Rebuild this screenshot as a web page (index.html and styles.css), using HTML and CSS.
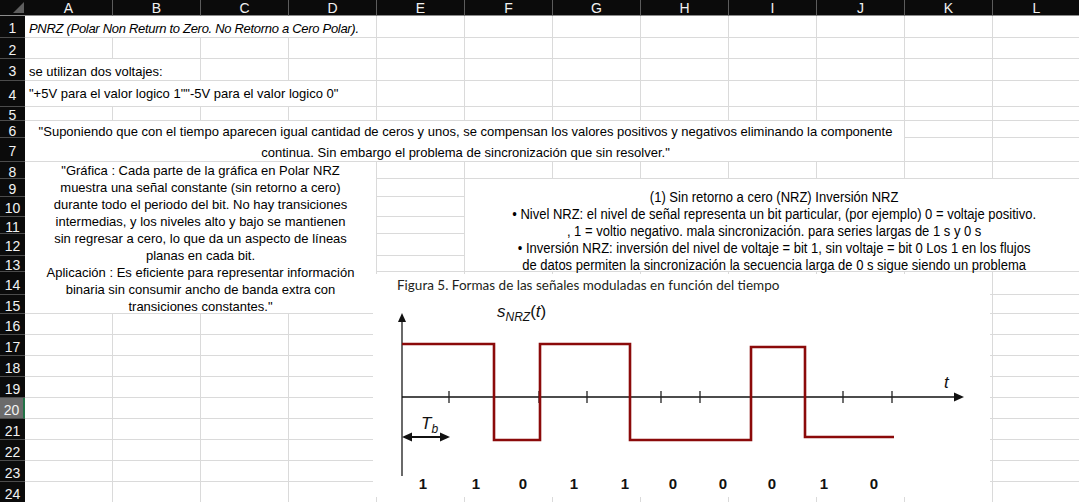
FILE: index.html
```html
<!DOCTYPE html>
<html lang="es">
<head>
<meta charset="utf-8">
<title>PNRZ</title>
<link rel="stylesheet" href="styles.css">
</head>
<body>
<div class="sheet">
  <div class="corner"></div>
  <div class="ch">A</div><div class="ch">B</div><div class="ch">C</div><div class="ch">D</div><div class="ch">E</div><div class="ch">F</div><div class="ch">G</div><div class="ch">H</div><div class="ch">I</div><div class="ch">J</div><div class="ch">K</div><div class="ch">L</div>

  <div class="rh">1</div>
  <div class="c cell m-a1 it">PNRZ (Polar Non Return to Zero. No Retorno a Cero Polar).</div>
  <div class="c"></div><div class="c"></div><div class="c"></div><div class="c"></div><div class="c"></div><div class="c"></div><div class="c"></div><div class="c"></div>

  <div class="rh">2</div>
  <div class="c"></div><div class="c"></div><div class="c"></div><div class="c"></div><div class="c"></div><div class="c"></div><div class="c"></div><div class="c"></div><div class="c"></div><div class="c"></div><div class="c"></div><div class="c"></div>

  <div class="rh">3</div>
  <div class="c cell m-a3">se utilizan dos voltajes:</div>
  <div class="c"></div><div class="c"></div><div class="c"></div><div class="c"></div><div class="c"></div><div class="c"></div><div class="c"></div><div class="c"></div><div class="c"></div><div class="c"></div>

  <div class="rh">4</div>
  <div class="c cell m-a4">"+5V para el valor logico 1""-5V para el valor logico 0"</div>
  <div class="c"></div><div class="c"></div><div class="c"></div><div class="c"></div><div class="c"></div><div class="c"></div><div class="c"></div><div class="c"></div>

  <div class="rh">5</div>
  <div class="c"></div><div class="c"></div><div class="c"></div><div class="c"></div><div class="c"></div><div class="c"></div><div class="c"></div><div class="c"></div><div class="c"></div><div class="c"></div><div class="c"></div><div class="c"></div>

  <div class="rh">6</div>
  <div class="c block m-a6">"Suponiendo que con el tiempo aparecen igual cantidad de ceros y unos, se compensan los valores positivos y negativos eliminando la componente<br>continua. Sin embargo el problema de sincronización que sin resolver."</div>
  <div class="c"></div><div class="c"></div>

  <div class="rh">7</div>
  <div class="c"></div><div class="c"></div>

  <div class="rh">8</div>
  <div class="c block m-a8">"Gráfica : Cada parte de la gráfica en Polar NRZ<br>muestra una señal constante (sin retorno a cero)<br>durante todo el periodo del bit. No hay transiciones<br>intermedias, y los niveles alto y bajo se mantienen<br>sin regresar a cero, lo que da un aspecto de líneas<br>planas en cada bit.<br>Aplicación : Es eficiente para representar información<br>binaria sin consumir ancho de banda extra con<br>transiciones constantes."</div>
  <div class="c"></div><div class="c"></div><div class="c"></div><div class="c"></div><div class="c"></div><div class="c"></div><div class="c"></div><div class="c"></div>

  <div class="rh">9</div>
  <div class="c"></div>
  <div class="c m-f9">
    <div class="narrow">(1) Sin retorno a cero (NRZ) Inversión NRZ<br>• Nivel NRZ: el nivel de señal representa un bit particular, (por ejemplo) 0 = voltaje positivo.<br>, 1 = voltio negativo. mala sincronización. para series largas de 1 s y 0 s<br>• Inversión NRZ: inversión del nivel de voltaje = bit 1, sin voltaje = bit 0 Los 1 en los flujos<br>de datos permiten la sincronización la secuencia larga de 0 s sigue siendo un problema</div>
  </div>

  <div class="rh">10</div>
  <div class="c"></div>
  <div class="rh">11</div>
  <div class="c"></div>
  <div class="rh">12</div>
  <div class="c"></div>
  <div class="rh">13</div>
  <div class="c"></div>

  <div class="rh">14</div>
  <div class="c"></div><div class="c"></div><div class="c"></div><div class="c"></div><div class="c"></div><div class="c"></div><div class="c"></div><div class="c"></div>
  <div class="rh">15</div>
  <div class="c"></div><div class="c"></div><div class="c"></div><div class="c"></div><div class="c"></div><div class="c"></div><div class="c"></div><div class="c"></div>

  <div class="rh">16</div>
  <div class="c"></div><div class="c"></div><div class="c"></div><div class="c"></div><div class="c"></div><div class="c"></div><div class="c"></div><div class="c"></div><div class="c"></div><div class="c"></div><div class="c"></div><div class="c"></div>
  <div class="rh">17</div>
  <div class="c"></div><div class="c"></div><div class="c"></div><div class="c"></div><div class="c"></div><div class="c"></div><div class="c"></div><div class="c"></div><div class="c"></div><div class="c"></div><div class="c"></div><div class="c"></div>
  <div class="rh">18</div>
  <div class="c"></div><div class="c"></div><div class="c"></div><div class="c"></div><div class="c"></div><div class="c"></div><div class="c"></div><div class="c"></div><div class="c"></div><div class="c"></div><div class="c"></div><div class="c"></div>
  <div class="rh">19</div>
  <div class="c"></div><div class="c"></div><div class="c"></div><div class="c"></div><div class="c"></div><div class="c"></div><div class="c"></div><div class="c"></div><div class="c"></div><div class="c"></div><div class="c"></div><div class="c"></div>
  <div class="rh sel">20</div>
  <div class="c"></div><div class="c"></div><div class="c"></div><div class="c"></div><div class="c"></div><div class="c"></div><div class="c"></div><div class="c"></div><div class="c"></div><div class="c"></div><div class="c"></div><div class="c"></div>
  <div class="rh">21</div>
  <div class="c"></div><div class="c"></div><div class="c"></div><div class="c"></div><div class="c"></div><div class="c"></div><div class="c"></div><div class="c"></div><div class="c"></div><div class="c"></div><div class="c"></div><div class="c"></div>
  <div class="rh">22</div>
  <div class="c"></div><div class="c"></div><div class="c"></div><div class="c"></div><div class="c"></div><div class="c"></div><div class="c"></div><div class="c"></div><div class="c"></div><div class="c"></div><div class="c"></div><div class="c"></div>
  <div class="rh">23</div>
  <div class="c"></div><div class="c"></div><div class="c"></div><div class="c"></div><div class="c"></div><div class="c"></div><div class="c"></div><div class="c"></div><div class="c"></div><div class="c"></div><div class="c"></div><div class="c"></div>
  <div class="rh">24</div>
  <div class="c"></div><div class="c"></div><div class="c"></div><div class="c"></div><div class="c"></div><div class="c"></div><div class="c"></div><div class="c"></div><div class="c"></div><div class="c"></div><div class="c"></div><div class="c"></div>

  <div class="figure">
    <div class="caption">Figura 5. Formas de las señales moduladas en función del tiempo</div>
    <svg class="chart" width="617" height="223" viewBox="0 0 617 223" xmlns="http://www.w3.org/2000/svg">
      <line x1="29" y1="46" x2="29" y2="202" stroke="#444" stroke-width="1.6"/>
      <polygon points="29,39 25,48 33,48" fill="#111"/>
      <line x1="29" y1="123" x2="583" y2="123" stroke="#111" stroke-width="1.3"/>
      <polygon points="591,123 581,118.5 581,127.5" fill="#111"/>
      <g stroke="#222" stroke-width="1.3">
        <line x1="76" y1="117" x2="76" y2="129"/>
        <line x1="166" y1="117" x2="166" y2="129"/>
        <line x1="214" y1="117" x2="214" y2="129"/>
        <line x1="288" y1="117" x2="288" y2="129"/>
        <line x1="327" y1="117" x2="327" y2="129"/>
        <line x1="470" y1="117" x2="470" y2="129"/>
        <line x1="519" y1="117" x2="519" y2="129"/>
      </g>
      <polyline points="29,70 121,70 121,166 167,166 167,70 257,70 257,166 378,166 378,73 432,73 432,163 521,163" fill="none" stroke="#8b0a0a" stroke-width="2.6"/>
      <line x1="36" y1="163" x2="69" y2="163" stroke="#111" stroke-width="2"/>
      <polygon points="29,163 39,158.5 39,167.5" fill="#111"/>
      <polygon points="77,163 67,158.5 67,167.5" fill="#111"/>
      <text class="lbl" x="124" y="43">s<tspan class="sub" dy="4">NRZ</tspan><tspan class="up" dy="-4">(</tspan>t<tspan class="up">)</tspan></text>
      <text class="lbl" x="571" y="114">t</text>
      <text class="lbl" x="48" y="155">T<tspan class="sub" dy="4">b</tspan></text>
      <g class="bits">
        <text x="50" y="215">1</text>
        <text x="103" y="215">1</text>
        <text x="150" y="215">0</text>
        <text x="201" y="215">1</text>
        <text x="252" y="215">1</text>
        <text x="300" y="215">0</text>
        <text x="350" y="215">0</text>
        <text x="399" y="215">0</text>
        <text x="451" y="215">1</text>
        <text x="501" y="215">0</text>
      </g>
    </svg>
  </div>
</div>
</body>
</html>
```
FILE: styles.css
```css
* {
  box-sizing: border-box;
  margin: 0;
  padding: 0;
}

html,
body {
  width: 1079px;
  height: 502px;
  overflow: hidden;
  background: #ffffff;
}

body {
  font-family: "Liberation Sans", Arial, sans-serif;
  font-size: 13px;
  color: #000000;
}

.sheet {
  position: relative;
  display: grid;
  width: 1081px;
  grid-template-columns: 25px repeat(12, 88px);
  grid-template-rows: 16px 22px 21px 22px 26px 14px 17px 24px 17px 18px 20px 17px 22px 16px 23px 19px repeat(9, 21px);
}

.c {
  background: #ffffff;
  border-right: 1px solid #dadada;
  border-bottom: 1px solid #dadada;
}

.corner {
  position: relative;
  background: #0b0b0b;
  border-bottom: 1px solid #8c8c8c;
}

.corner::after {
  content: "";
  position: absolute;
  right: 1px;
  bottom: 2px;
  width: 0;
  height: 0;
  border-left: 11px solid transparent;
  border-bottom: 11px solid #5e5e5e;
}

.ch {
  display: flex;
  align-items: center;
  justify-content: center;
  background: #0b0b0b;
  color: #f2f2f2;
  font-size: 14px;
  line-height: 1;
  border-right: 1px solid #5c5c5c;
  border-bottom: 1px solid #8c8c8c;
}

.rh {
  display: flex;
  align-items: center;
  justify-content: center;
  padding-top: 3px;
  background: #0b0b0b;
  color: #f2f2f2;
  font-size: 14px;
  line-height: 1;
  border-bottom: 1px solid #4c4c4c;
}

.rh.sel {
  background: #6b6b6b;
  border-right: 2px solid #217346;
}

.cell {
  display: flex;
  align-items: center;
  padding: 4px 0 0 4px;
  white-space: nowrap;
}

.it {
  font-style: italic;
  letter-spacing: -0.3px;
}

.block {
  display: flex;
  flex-direction: column;
  justify-content: center;
  text-align: center;
  white-space: nowrap;
  line-height: 17px;
}

.m-a1 {
  grid-column: 2 / 6;
  grid-row: 2;
}

.m-a3 {
  grid-column: 2 / 4;
  grid-row: 4;
}

.m-a4 {
  grid-column: 2 / 6;
  grid-row: 5;
  padding-top: 0;
}

.m-a6 {
  grid-column: 2 / 12;
  grid-row: 7 / 9;
  line-height: 21px;
  padding: 1px 0 0 2px;
}

.m-a8 {
  grid-column: 2 / 6;
  grid-row: 9 / 17;
  padding-top: 1px;
}

.m-f9 {
  grid-column: 7 / 14;
  grid-row: 10 / 15;
  display: flex;
  flex-direction: column;
  justify-content: flex-end;
  align-items: center;
  padding: 0 2px 0 6px;
}

.narrow {
  flex: none;
  font-family: "Liberation Sans", Arial, sans-serif;
  font-size: 15.3px;
  line-height: 17px;
  text-align: center;
  white-space: nowrap;
  transform: scaleX(0.85);
  transform-origin: center;
  margin-bottom: -2px;
}

.figure {
  position: absolute;
  left: 373px;
  top: 274px;
  width: 617px;
  height: 223px;
  background: #ffffff;
}

.caption {
  position: absolute;
  left: 24px;
  top: 3px;
  font-family: Lato, "Open Sans", sans-serif;
  font-size: 13.5px;
  color: #231f20;
  white-space: nowrap;
}

.chart {
  display: block;
}

.lbl {
  font-family: "Liberation Sans", Arial, sans-serif;
  font-size: 17px;
  font-style: italic;
  fill: #111111;
}

.sub {
  font-size: 12px;
}

.up {
  font-style: normal;
}

.bits text {
  font-family: "Liberation Sans", Arial, sans-serif;
  font-size: 15px;
  font-weight: bold;
  text-anchor: middle;
  fill: #111111;
}
```
